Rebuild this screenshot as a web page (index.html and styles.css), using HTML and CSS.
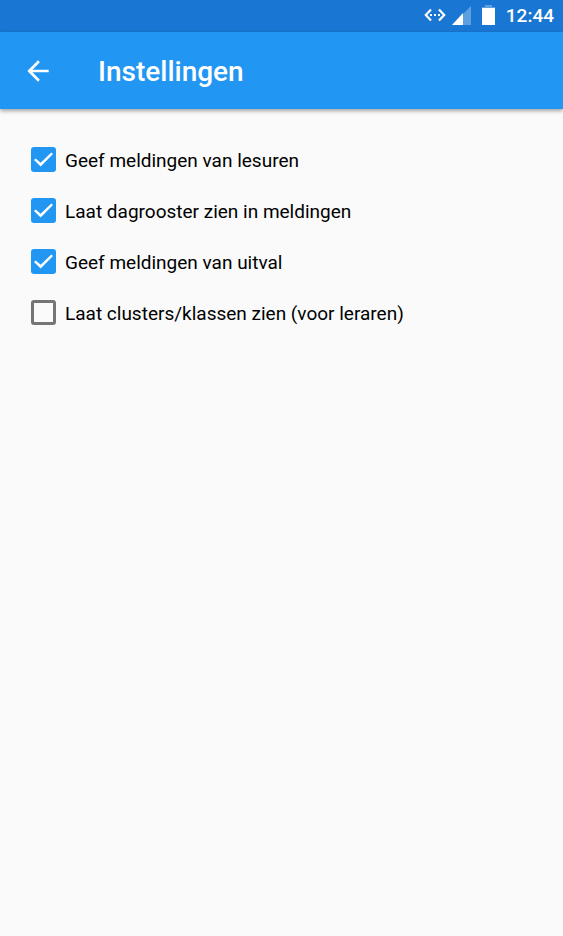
FILE: index.html
```html
<!DOCTYPE html>
<html lang="nl">
<head>
<meta charset="utf-8">
<meta name="viewport" content="width=device-width, initial-scale=1">
<title>Instellingen</title>
<link rel="stylesheet" href="styles.css">
</head>
<body>
<div class="status-bar">
  <svg class="ethernet" viewBox="0 0 22 14" aria-hidden="true"><path d="M7 1.500L1.800 7 7 12.500M15 1.500L20.200 7 15 12.500" fill="none" stroke="#fff" stroke-width="2.200"/><path d="M6 6h2v2H6zM10 6h2v2h-2zM14 6h2v2h-2z" fill="#fff"/></svg>
  <svg class="signal" viewBox="0 0 19 20" aria-hidden="true"><path d="M19 1v19H0z" fill="#fff" opacity=".3"/><path d="M11 8v12H0z" fill="#fff"/></svg>
  <svg class="battery" viewBox="0 0 13 20" aria-hidden="true"><path d="M3 0h7v2h3v1H0V2h3z" fill="#fff" opacity=".3"/><path d="M0 3h13v17H0z" fill="#fff"/></svg>
  <time class="clock">12:44</time>
</div>
<header class="app-bar">
  <button class="back" type="button" aria-label="Terug"><svg viewBox="0 0 24 24" aria-hidden="true"><path d="M20 11H7.830l5.590-5.590L12 4l-8 8 8 8 1.410-1.410L7.830 13H20v-2z" fill="#fff"/></svg></button>
  <h1 class="title">Instellingen</h1>
</header>
<main class="settings">
  <label class="option"><input type="checkbox" checked><span>Geef meldingen van lesuren</span></label>
  <label class="option"><input type="checkbox" checked><span>Laat dagrooster zien in meldingen</span></label>
  <label class="option"><input type="checkbox" checked><span>Geef meldingen van uitval</span></label>
  <label class="option"><input type="checkbox"><span>Laat clusters/klassen zien (voor leraren)</span></label>
</main>
</body>
</html>
```

FILE: styles.css
```css
* { box-sizing: border-box; }
body {
  margin: 0;
  min-height: 100vh;
  background: #fafafa;
  color: #000;
  font-family: Roboto, sans-serif;
}
.status-bar {
  display: flex;
  align-items: center;
  justify-content: flex-end;
  height: 32px;
  padding: 0 9px 2px 0;
  background: #1976d2;
  color: #fff;
}
.ethernet { width: 22px; height: 14px; margin-right: 6px; }
.signal { width: 19px; height: 20px; margin-right: 11px; }
.battery { width: 13px; height: 20px; margin-right: 11px; }
.clock { padding-top: 2px; font-size: 19px; font-weight: 500; line-height: 30px; }
.app-bar {
  display: flex;
  align-items: center;
  height: 77px;
  padding-left: 22px;
  background: #2196f3;
  color: #fff;
  box-shadow: 0 2px 4px rgba(0, 0, 0, .35);
}
.back {
  width: 32px;
  height: 32px;
  padding: 0;
  border: 0;
  background: none;
}
.back svg { display: block; width: 32px; height: 32px; }
.title { margin: 0 0 0 44px; padding-top: 2px; font-size: 28px; font-weight: 500; line-height: 34px; }
.settings { display: flex; flex-direction: column; padding: 25px 31px; }
.option { display: flex; align-items: center; gap: 9px; min-height: 51px; font-size: 19px; line-height: 24px; }
.option span { padding-top: 2px; }
.option input {
  appearance: none;
  display: grid;
  place-items: center;
  flex: none;
  width: 25px;
  height: 25px;
  margin: 0;
  border: 3px solid #757575;
  border-radius: 3px;
}
.option input:checked { border: 0; background: #2196f3; }
.option input:checked::before {
  content: "";
  width: 19px;
  height: 15px;
  background: #fff;
  clip-path: polygon(0 54%, 9% 43%, 35% 72%, 91% 3%, 100% 14%, 35% 97%);
}
```
